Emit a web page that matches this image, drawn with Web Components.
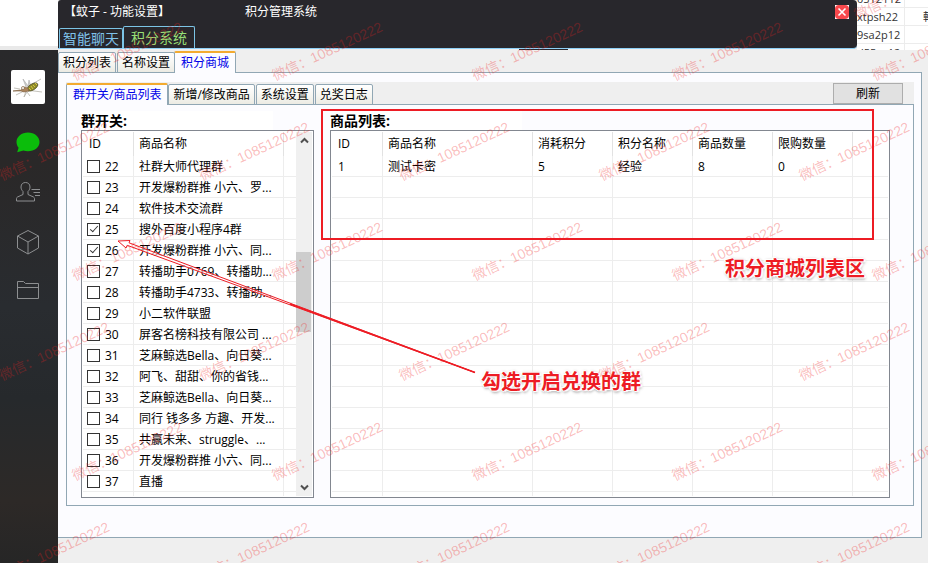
<!DOCTYPE html>
<html lang="zh-CN">
<head>
<meta charset="utf-8">
<title>积分管理系统</title>
<style>
    html, body{height: 100%}
    body{
        margin: 0;
        overflow: hidden;
        background: #efefef;
        color: #000;
        font: 12px/18px "Open Sans", "Noto Sans CJK SC", sans-serif;
    }
</style>
</head>
<body>
<app-shell>
    <title-bar slot="top" name="【蚊子 - 功能设置】" caption="积分管理系统"></title-bar>
    <contact-rows slot="behind"></contact-rows>
    <side-nav slot="side"></side-nav>
    <tab-panel class="outer" tabs="积分列表,名称设置,积分商城" active="2">
        <tab-panel class="inner" tabs="群开关/商品列表,新增/修改商品,系统设置,兑奖日志" active="0">
            <push-button slot="action">刷新</push-button>
            <shop-page></shop-page>
        </tab-panel>
    </tab-panel>
</app-shell>
<note-layer></note-layer>
<water-mark text="微信：1085120222"></water-mark>

<script>
function define(name, html, setup){
    const template = document.createElement('template');
    template.innerHTML = html;
    customElements.define(name, class extends HTMLElement{
        constructor(){
            super();
            this.attachShadow({mode: 'open'});
            this.shadowRoot.appendChild(template.content.cloneNode(true));
        }
        connectedCallback(){
            if(setup && !this.ready){
                this.ready = true;
                setup(this, this.shadowRoot);
            }
        }
    });
}

define('app-shell', `
    <style>
        :host{
            display: grid;
            height: 100vh;
            grid-template: 50px 1fr / 58px 1fr;
        }
        .corner{background: #fff; border-bottom: 4px solid #e9e9e9; box-sizing: border-box}
        .top{display: flex; min-width: 0; background: #fff}
        .top slot[name=top]::slotted(*){flex: 1}
        main{display: flex; flex-direction: column; min-width: 0; padding: 0 6px 25px 0}
        ::slotted(.outer){flex: 1; --pad: 9px 7px 31px 8px; --left: 0}
    </style>
    <div class="corner"></div>
    <div class="top"><slot name="top"></slot><slot name="behind"></slot></div>
    <slot name="side"></slot>
    <main><slot></slot></main>
`);

define('title-bar', `
    <style>
        :host{display: flex; flex-direction: column; background: #efefef}
        header{
            flex: 1;
            display: flex;
            flex-direction: column;
            justify-content: space-between;
            background: #28272c;
            border-bottom: 1px solid #8ed0f7;
            border-radius: 3px 4px 4px 0;
        }
        .row{display: flex; align-items: center; color: #fff; padding: 3px 8px 0 6px}
        .caption{flex: 1; padding-left: 75px}
        .close{
            width: 14px; height: 14px; padding: 0; border: 0;
            background: #fff; line-height: 0;
        }
        nav{display: flex; align-items: flex-end; padding-left: 1px}
        nav button{
            font: 14px/19px "Open Sans", "Noto Sans CJK SC", sans-serif;
            color: #7fc1e9;
            background: none;
            border: 1px solid #7cc4e6;
            border-bottom: 0;
            border-radius: 2px 2px 0 0;
            padding: 0 3px;
        }
        nav button.on{color: #97de75; padding: 1px 7px}
        /* edge of the window that lies underneath */
        .under{height: 1px; background: linear-gradient(#28272c, #28272c) 461px 0 / 49px 1px no-repeat}
    </style>
    <header>
        <div class="row">
            <span class="name"></span>
            <span class="caption"></span>
            <button class="close" aria-label="关闭">
                <svg width="14" height="14" viewBox="0 0 14 14"><rect width="14" height="14" rx="4" fill="#f9484c"/><path d="M3.500 3.500l7 7M10.500 3.500l-7 7" stroke="#fff" stroke-width="1.600"/></svg>
            </button>
        </div>
        <nav><button>智能聊天</button><button class="on">积分系统</button></nav>
    </header>
    <div class="under"></div>
`, (el, root) => {
    root.querySelector('.name').textContent = el.getAttribute('name');
    root.querySelector('.caption').textContent = el.getAttribute('caption');
});

define('contact-rows', `
    <style>
        :host{display: block; width: 71px; overflow: hidden; color: #333; font-size: 11px}
        table{border-collapse: collapse; width: 100%; margin-top: -10px; table-layout: fixed}
        td{
            height: 17px; line-height: 17px; padding: 0;
            border-bottom: 1px solid #ececec;
            white-space: nowrap; overflow: hidden;
        }
        td:first-child{width: 47px; border-right: 1px solid #ececec}
        td:last-child{padding-left: 18px}
    </style>
    <table>
        <tr><td>0512112</td><td></td></tr>
        <tr><td>xtpsh22</td><td>轉</td></tr>
        <tr><td>9sa2p12</td><td></td></tr>
        <tr><td>d55sa12</td><td></td></tr>
    </table>
`);

define('side-nav', `
    <style>
        :host{
            display: flex;
            flex-direction: column;
            align-items: center;
            padding: 20px 2px 0 0;
            background: linear-gradient(#29292b, #2a2828 22%, #292c30 50%, #26292c 68%, #2d2927 88%, #262626);
        }
        .avatar{background: #fff; border-radius: 2px; width: 34px; height: 34px; margin-bottom: 14px}
        button{
            display: flex; align-items: center; justify-content: center;
            width: 40px; height: 49px; padding: 0; border: 0; background: none;
        }
        svg{fill: none; stroke: #8d8f91; stroke-width: 1}
    </style>
    <svg class="avatar" viewBox="0 0 34 34">
        <path d="M15 17L12 9l5 7M17 16l1-6 2 7" fill="#cfd0cc" stroke="#aaa" stroke-width=".6"/>
        <path d="M16 17l14-8M15 20l16 2M13 21l-8 4M15 21l-2 6 3-5 3 4M9 19L3 18" stroke="#aaa89d" stroke-width=".7"/>
        <ellipse cx="21.500" cy="17" rx="6" ry="3" transform="rotate(-32 21.500 17)" fill="#8d8b2c" stroke="#4e4b20" stroke-width=".7"/>
        <path d="M18 18l2 2M20 16l2 3M22 15l2 2M24 13l2 2" stroke="#d9c83c"/>
        <path d="M2 21l8-1 3-3 4 1 1 3-5 1-3-1z" fill="#a9825a" stroke="#7b5b3a" stroke-width=".6"/>
        <circle cx="12" cy="18" r="1.500" fill="#fff" stroke="#7b5b3a" stroke-width=".7"/>
    </svg>
    <button aria-label="聊天">
        <svg width="24" height="21" viewBox="0 0 24 21"><path d="M12 0.500c6.400 0 11.500 4.200 11.500 9.500S18.400 19.300 12 19.300c-1.600 0-3.200-.3-4.600-.8L1.200 20.200l1.400-4.400C1.200 14.200.5 12.200.5 10 .5 4.700 5.600.5 12 .5z" fill="#0bbd0b" stroke="none"/></svg>
    </button>
    <button aria-label="通讯录">
        <svg width="24" height="20" viewBox="0 0 24 20"><path d="M7 9.500C5.500 8 5 6.500 5 5c0-3 2-4.500 4.500-4.500S14 2 14 5c0 1.500-.5 3-2 4.500v3l5.500 2.500c.7.400 1 .9 1 1.500v2.500H.5V16.500c0-.6.300-1.100 1-1.500L7 12.500zM15.500 7.500H24M17.500 10.500H24M19 13.500h5"/></svg>
    </button>
    <button aria-label="收藏">
        <svg width="22" height="28" viewBox="0 0 22 28"><path d="M11 3.500L21.500 9v12L11 27 .5 21V9zM.5 9L11 15l10.500-6M11 15v12"/></svg>
    </button>
    <button aria-label="文件">
        <svg width="22" height="18" viewBox="0 0 22 18"><path d="M.5 17.500V.5h6l2 2h13v15zM.5 6.500h21"/></svg>
    </button>
`);

define('tab-panel', `
    <style>
        :host{display: flex; flex-direction: column; min-width: 0; box-sizing: border-box}
        .strip{display: flex; align-items: flex-end; height: 23px; background: #efefef}
        .tab{
            font: inherit;
            line-height: 18px;
            height: 21px;
            box-sizing: border-box;
            padding: 0 4px;
            margin-right: 1px;
            white-space: nowrap;
            background: linear-gradient(#fff, #f5f5f0 60%, #ecebe3);
            border: 1px solid #91a7b4;
            border-radius: 2px 2px 0 0;
        }
        .tab.on{
            position: relative;
            height: 22px;
            padding: 0 6px;
            margin-right: 0;
            color: #0000e8;
            background: #fcfcff;
            border-bottom: 0;
            border-top: 2px solid #f3ab30;
        }
        .tab + .tab.on{margin-left: -2px}
        .space{flex: 1}
        .page{
            flex: 1;
            display: flex;
            flex-direction: column;
            margin-top: -1px;
            background: #fcfcff;
            border: 1px solid #91a7b4;
            border-left-width: var(--left, 1px);
            padding: var(--pad);
        }
        ::slotted(tab-panel){flex: 1; --pad: 6px 23px 7px 14px; --left: 1px}
        ::slotted(shop-page){flex: 1}
    </style>
    <div class="strip"><span class="space"></span><slot name="action"></slot></div>
    <div class="page"><slot></slot></div>
`, (el, root) => {
    const space = root.querySelector('.space');
    el.getAttribute('tabs').split(',').forEach((text, i) => {
        const tab = document.createElement('button');
        tab.className = i == el.getAttribute('active') ? 'tab on' : 'tab';
        tab.textContent = text;
        tab.addEventListener('click', () => {
            root.querySelector('.on').classList.remove('on');
            tab.classList.add('on');
        });
        space.before(tab);
    });
});

define('push-button', `
    <style>
        :host{display: block; position: relative; margin: 0 11px 1px 0}
        button{
            display: block; width: 70px; height: 21px; padding: 0;
            font: inherit; line-height: 18px;
            background: #e1e1e1; border: 1px solid #adadad;
        }
    </style>
    <button><slot></slot></button>
`);

define('shop-page', `
    <style>
        :host{display: flex; gap: 16px; min-width: 0}
        section{display: flex; flex-direction: column; min-width: 0}
        .groups{flex: 0 0 233px}
        .goods{flex: 1}
        h2{
            margin: 0; width: 192px; background: #fff;
            font-size: 14px; line-height: 19px; font-weight: bold;
        }
        grid-box{flex: 1}
    </style>
    <section class="groups">
        <h2>群开关:</h2>
        <grid-box kind="groups"></grid-box>
    </section>
    <section class="goods">
        <h2>商品列表:</h2>
        <grid-box kind="goods"></grid-box>
    </section>
`);

const lists = {
    groups: {
        widths: [51, 150, 0],
        heads: ['ID', '商品名称', ''],
        checked: ['25', '26'],
        rows: [
            '社群大师代理群', '开发爆粉群推 小六、罗...', '软件技术交流群', '搜外百度小程序4群',
            '开发爆粉群推 小六、同...', '转播助手0769、转播助...', '转播助手4733、转播助...',
            '小二软件联盟', '屏客名榜科技有限公司 ...', '芝麻鲸选Bella、向日葵...',
            '阿飞、甜甜、你的省钱...', '芝麻鲸选Bella、向日葵...', '同行 钱多多 方趣、开发...',
            '共赢未来、struggle、...', '开发爆粉群推 小六、同...', '直播'
        ].map((name, i) => [String(22 + i), name, ''])
    },
    goods: {
        widths: [51, 150, 80, 80, 80, 80, 0],
        heads: ['ID', '商品名称', '消耗积分', '积分名称', '商品数量', '限购数量', ''],
        rows: [['1', '测试卡密', '5', '经验', '8', '0', '']]
    }
};

define('grid-box', `
    <style>
        :host{
            display: flex;
            box-sizing: border-box;
            padding: 1px;
            background: #fff;
            border: 1px solid #828790;
        }
        .view{flex: 1; min-width: 0; display: flex; flex-direction: column}
        table{
            flex: 1;
            width: 100%;
            border-collapse: separate;
            border-spacing: 0;
            table-layout: fixed;
        }
        th, td{
            box-sizing: border-box;
            padding: 0 0 0 5px;
            border-right: 1px solid #ededed;
            text-align: left;
            font-weight: normal;
            white-space: nowrap;
        }
        th{height: 24px; border-color: #e2e2e2}
        td{height: 21px; line-height: 18px; padding-top: 1px; border-bottom: 1px solid #ededed}
        th:first-child, td:first-child{padding-left: 6px}
        th:last-child, td:last-child{border-right: 0}
        tr.tail td{height: auto; border-bottom: 0}
        :host([kind=groups]) td:first-child{padding-left: 4px}
        label{display: flex; align-items: center; gap: 5px}
        input{
            appearance: none;
            position: relative;
            width: 13px; height: 13px; margin: 0;
            border: 1px solid #333;
            background: #fff;
        }
        input:checked::after{
            content: "";
            position: absolute;
            left: 4px; top: 0;
            width: 3px; height: 7px;
            border: solid #333;
            border-width: 0 1px 1px 0;
            transform: rotate(42deg);
        }
        .scroll{display: none}
        :host([kind=groups]) .scroll{
            display: flex; flex-direction: column;
            width: 16px; background: #f0f0f0;
        }
        .scroll button{height: 17px; width: 16px; padding: 0; border: 0; background: none; line-height: 0}
        .scroll svg{fill: none; stroke: #505050; stroke-width: 2}
        .before{flex: 103}
        .thumb{flex: 79; background: #cdcdcd; margin-right: 1px}
        .after{flex: 147}
    </style>
    <div class="view"><table><colgroup></colgroup><thead></thead><tbody></tbody></table></div>
    <div class="scroll">
        <button aria-label="向上"><svg width="9" height="7" viewBox="0 0 9 7"><path d="M1 5.500L4.500 2 8 5.500"/></svg></button>
        <div class="before"></div><div class="thumb"></div><div class="after"></div>
        <button aria-label="向下"><svg width="9" height="7" viewBox="0 0 9 7"><path d="M1 1.500L4.500 5 8 1.500"/></svg></button>
    </div>
`, (el, root) => {
    const kind = el.getAttribute('kind');
    const list = lists[kind];
    const rows = list.rows.slice();
    while(rows.length < 16) rows.push(list.heads.map(() => ''));

    root.querySelector('colgroup').innerHTML = list.widths
        .map(w => w ? `<col style="width:${w}px">` : '<col>').join('');
    root.querySelector('thead').innerHTML =
        `<tr>${list.heads.map(h => `<th>${h}</th>`).join('')}</tr>`;
    root.querySelector('tbody').innerHTML = rows.map(row =>
        `<tr>${row.map((cell, i) => {
            if(kind == 'groups' && i == 0){
                const on = list.checked.includes(cell) ? 'checked' : '';
                return `<td><label><input type="checkbox" ${on}>${cell}</label></td>`;
            }
            return `<td>${cell}</td>`;
        }).join('')}</tr>`).join('') +
        `<tr class="tail">${list.heads.map(() => '<td></td>').join('')}</tr>`;
});

// notes drawn over the window: frame, arrow and two captions
define('note-layer', `
    <style>
        :host{position: absolute; inset: 0; pointer-events: none}
        svg{position: absolute; left: 0; top: 0; width: 100%; height: 100%}
        .frame{
            position: absolute; left: 321px; top: 109px;
            width: 549px; height: 127px;
            border: 2px solid #ed1c24;
        }
        p{
            position: absolute; margin: 0;
            font-size: 20px; line-height: 26px; font-weight: bold;
            color: #ed1c24;
            white-space: nowrap;
            text-shadow: 1px 0 #fff, -1px 0 #fff, 0 1px #fff, 0 -1px #fff,
                2px 1px 1px #fff, -2px -1px 1px #fff, 0 0 3px #aaa, 1px 2px 3px #999;
        }
        .area{left: 725px; top: 256px}
        .pick{left: 481px; top: 369px}
    </style>
    <div class="frame"></div>
    <svg>
        <path d="M475 372.500L129 242.800l1-2.300-12 .5 8 7 1.200-2.700z" fill="#fff" fill-opacity=".6" stroke="#ed1c24" stroke-linejoin="round"/>
        <path d="M475 372.500L290 304" stroke="#ed1c24" stroke-width="1.500"/>
    </svg>
    <p class="area">积分商城列表区</p>
    <p class="pick">勾选开启兑换的群</p>
`);

define('water-mark', `
    <style>
        :host{position: absolute; inset: 0; overflow: hidden; pointer-events: none}
        svg{width: 100%; height: 100%; display: block}
        text{
            font: 14px "Liberation Sans", "Noto Sans CJK SC", sans-serif;
            fill: #f02020;
            fill-opacity: .3;
        }
    </style>
    <svg></svg>
`, (el, root) => {
    const put = (x, y) =>
        `<text transform="translate(${x} ${y}) rotate(-25)">${el.getAttribute('text')}</text>`;
    let marks = put(857, 20);
    for(let row = 0; row < 6; row++){
        for(let x = row % 2 ? 2 : 75; x < 928; x += 200){
            marks += put(x, 81 + row * 100);
        }
    }
    root.querySelector('svg').innerHTML = marks;
});
</script>
</body>
</html>
